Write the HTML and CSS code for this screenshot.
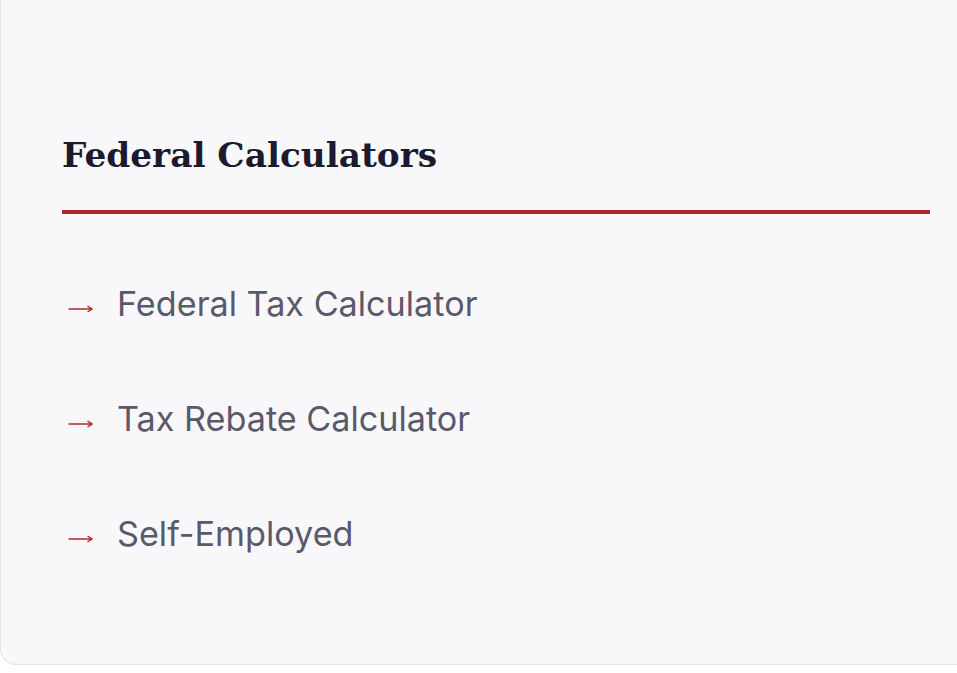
FILE: index.html
```html
<!DOCTYPE html>
<html lang="en">
<head>
<meta charset="utf-8">
<title>Federal Calculators</title>
<link rel="stylesheet" href="styles.css">
</head>
<body>
<div class="page">
  <section class="card">
    <h2 class="card-title">Federal Calculators</h2>
    <ul class="link-list">
      <li class="link-item"><span class="arrow"><svg viewBox="0 0 25 10" width="25" height="10" aria-hidden="true"><path d="M0.5 5H24M19.5 2L24 5L19.5 8" fill="none" stroke="#b3272a" stroke-width="1.4" stroke-linejoin="miter"/></svg></span><a class="link" href="#">Federal Tax Calculator</a></li>
      <li class="link-item"><span class="arrow"><svg viewBox="0 0 25 10" width="25" height="10" aria-hidden="true"><path d="M0.5 5H24M19.5 2L24 5L19.5 8" fill="none" stroke="#b3272a" stroke-width="1.4" stroke-linejoin="miter"/></svg></span><a class="link" href="#">Tax Rebate Calculator</a></li>
      <li class="link-item"><span class="arrow"><svg viewBox="0 0 25 10" width="25" height="10" aria-hidden="true"><path d="M0.5 5H24M19.5 2L24 5L19.5 8" fill="none" stroke="#b3272a" stroke-width="1.4" stroke-linejoin="miter"/></svg></span><a class="link" href="#">Self-Employed</a></li>
    </ul>
  </section>
</div>
</body>
</html>
```
FILE: styles.css
```css
html, body {
  margin: 0;
  padding: 0;
  background: #ffffff;
}
.page {
  width: 957px;
  height: 673px;
  overflow: hidden;
}
.card {
  box-sizing: border-box;
  height: 665px;
  width: 990px;
  background: #f8f8fa;
  border: 1px solid #e3e3e8;
  border-top: none;
  border-radius: 0 0 0 16px;
  padding: 127px 60px 0 61px;
}
.card-title {
  margin: 0;
  font-family: "DejaVu Serif", serif;
  font-weight: 700;
  font-size: 34.3px;
  line-height: 56px;
  color: #1b1a2e;
  padding-bottom: 27px;
  border-bottom: 4px solid #b3272a;
  width: 868px;
}
.link-list {
  list-style: none;
  margin: 0;
  padding: 32px 0 0 0;
  display: flex;
  flex-direction: column;
}
.link-item {
  display: flex;
  align-items: center;
  height: 115px;
}
.arrow {
  display: flex;
  align-items: center;
  width: 55px;
  padding-left: 6px;
  padding-top: 10px;
  box-sizing: border-box;
}
.arrow svg {
  display: block;
}
.link {
  font-family: "Inter", sans-serif;
  font-size: 34.2px;
  color: #5a596c;
  text-decoration: none;
}
```
